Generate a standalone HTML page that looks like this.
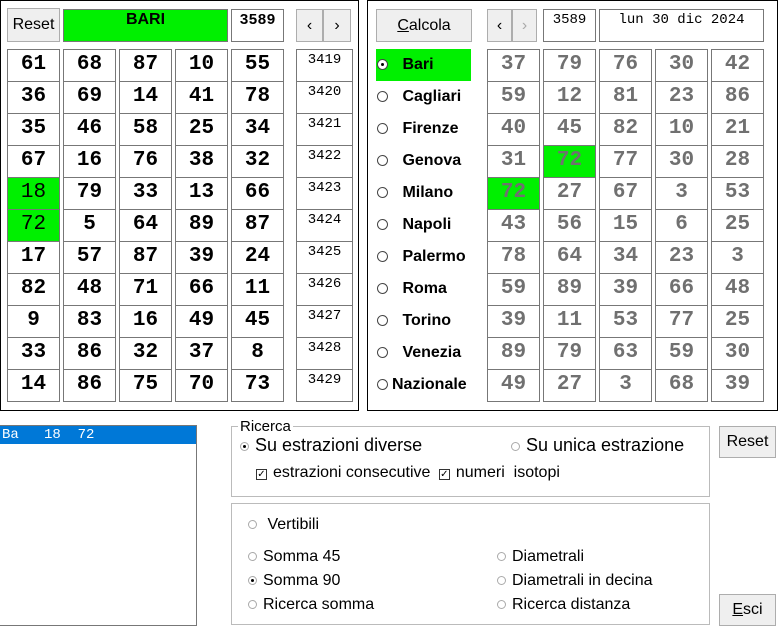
<!DOCTYPE html>
<html><head><meta charset="utf-8"><style>
*{box-sizing:border-box;margin:0;padding:0}
body{width:780px;height:627px;background:#fff;position:relative;overflow:hidden;font-family:"Liberation Sans",Arial,sans-serif}
.a{position:absolute}
.panel{position:absolute;border:1px solid #000}
.col{position:absolute;border-bottom:1px solid #777}
.col div{height:32px;border:1px solid #777;border-bottom:none;text-align:center;font:bold 21px/30px "Liberation Mono",monospace;color:#000}
.col.g div{color:#707070}
.col.s div{font:normal 14px/20px "Liberation Mono",monospace}
.col div.gr{background:#00f000}
.btn{position:absolute;background:#efefef;border:1px solid #adadad;text-align:center;font-size:16px;color:#000}
.box{position:absolute;border:1px solid #777;background:#fff;text-align:center;font:bold 15px/22px "Liberation Mono",monospace}
.nm{position:absolute;left:376px;width:95px;height:32px;font:bold 16px/32px "Liberation Sans",sans-serif}
.nm i{display:inline-block;width:11px;height:11px;border:1px solid #444;border-radius:50%;margin:0 10px 0 1px;vertical-align:-1px;position:relative;background:#fff}
.nm i.on:after{content:"";position:absolute;left:3px;top:3px;width:3px;height:3px;border-radius:50%;background:#000}
.n{font-family:"Liberation Sans Narrow","Liberation Sans",sans-serif;font-size:16px;position:absolute;color:#000;white-space:nowrap}
.r{display:inline-block;width:9px;height:9px;border:1px solid #aaa;border-radius:50%;position:relative;margin-right:6px;vertical-align:0}
.r.on:after{content:"";position:absolute;left:2px;top:2px;width:3px;height:3px;background:#000;border-radius:50%}
.cb{display:inline-block;width:11px;height:11px;border:1px solid #333;font-size:10px;line-height:9px;text-align:center;margin-right:6px;vertical-align:0}
.grp{position:absolute;border:1px solid #bbb}
</style></head><body>
<div class="panel" style="left:0;top:0;width:359px;height:411px"></div>
<div class="panel" style="left:367px;top:0;width:411px;height:411px"></div>

<div class="btn" style="left:7px;top:8px;width:53px;height:34px;line-height:32px">Reset</div>
<div class="a" style="left:63px;top:9px;width:165px;height:33px;background:#00f000;border:1px solid #777;text-align:center;font:bold 16px/20px 'Liberation Sans',sans-serif">BARI</div>
<div class="box" style="left:231px;top:9px;width:53px;height:33px">3589</div>
<div class="btn" style="left:296px;top:9px;width:27px;height:33px;line-height:31px">&lsaquo;</div>
<div class="btn" style="left:323px;top:9px;width:28px;height:33px;line-height:31px">&rsaquo;</div>

<div class="col" style="left:7px;top:49px;width:53px"><div>61</div><div>36</div><div>35</div><div>67</div><div class="gr" style="font-weight:normal">18</div><div class="gr" style="font-weight:normal">72</div><div>17</div><div>82</div><div>9</div><div>33</div><div>14</div></div>
<div class="col" style="left:63px;top:49px;width:53px"><div>68</div><div>69</div><div>46</div><div>16</div><div>79</div><div>5</div><div>57</div><div>48</div><div>83</div><div>86</div><div>86</div></div>
<div class="col" style="left:119px;top:49px;width:53px"><div>87</div><div>14</div><div>58</div><div>76</div><div>33</div><div>64</div><div>87</div><div>71</div><div>16</div><div>32</div><div>75</div></div>
<div class="col" style="left:175px;top:49px;width:53px"><div>10</div><div>41</div><div>25</div><div>38</div><div>13</div><div>89</div><div>39</div><div>66</div><div>49</div><div>37</div><div>70</div></div>
<div class="col" style="left:231px;top:49px;width:53px"><div>55</div><div>78</div><div>34</div><div>32</div><div>66</div><div>87</div><div>24</div><div>11</div><div>45</div><div>8</div><div>73</div></div>
<div class="col s" style="left:296px;top:49px;width:57px"><div>3419</div><div>3420</div><div>3421</div><div>3422</div><div>3423</div><div>3424</div><div>3425</div><div>3426</div><div>3427</div><div>3428</div><div>3429</div></div>

<div class="btn" style="left:376px;top:9px;width:96px;height:33px;line-height:31px"><u>C</u>alcola</div>
<div class="btn" style="left:487px;top:9px;width:25px;height:33px;line-height:31px">&lsaquo;</div>
<div class="btn" style="left:512px;top:9px;width:25px;height:33px;line-height:31px;color:#aaa">&rsaquo;</div>
<div class="box" style="left:543px;top:9px;width:53px;height:33px;font-weight:normal;font-size:14px;line-height:20px">3589</div>
<div class="box" style="left:599px;top:9px;width:165px;height:33px;font-weight:normal;font-size:14px;line-height:20px">lun 30 dic 2024</div>

<div class="nm" style="top:49px;background:#00f000"><i class="on"></i> Bari</div>
<div class="nm" style="top:81px"><i></i> Cagliari</div>
<div class="nm" style="top:113px"><i></i> Firenze</div>
<div class="nm" style="top:145px"><i></i> Genova</div>
<div class="nm" style="top:177px"><i></i> Milano</div>
<div class="nm" style="top:209px"><i></i> Napoli</div>
<div class="nm" style="top:241px"><i></i> Palermo</div>
<div class="nm" style="top:273px"><i></i> Roma</div>
<div class="nm" style="top:305px"><i></i> Torino</div>
<div class="nm" style="top:337px"><i></i> Venezia</div>
<div class="nm" style="top:369px"><i style="margin-right:4px"></i>Nazionale</div>

<div class="col g" style="left:487px;top:49px;width:53px"><div>37</div><div>59</div><div>40</div><div>31</div><div class="gr">72</div><div>43</div><div>78</div><div>59</div><div>39</div><div>89</div><div>49</div></div>
<div class="col g" style="left:543px;top:49px;width:53px"><div>79</div><div>12</div><div>45</div><div class="gr">72</div><div>27</div><div>56</div><div>64</div><div>89</div><div>11</div><div>79</div><div>27</div></div>
<div class="col g" style="left:599px;top:49px;width:53px"><div>76</div><div>81</div><div>82</div><div>77</div><div>67</div><div>15</div><div>34</div><div>39</div><div>53</div><div>63</div><div>3</div></div>
<div class="col g" style="left:655px;top:49px;width:53px"><div>30</div><div>23</div><div>10</div><div>30</div><div>3</div><div>6</div><div>23</div><div>66</div><div>77</div><div>59</div><div>68</div></div>
<div class="col g" style="left:711px;top:49px;width:53px"><div>42</div><div>86</div><div>21</div><div>28</div><div>53</div><div>25</div><div>3</div><div>48</div><div>25</div><div>30</div><div>39</div></div>

<div class="a" style="left:0;top:425px;width:197px;height:201px;border:1px solid #777;border-left:none"></div>
<div class="a" style="left:0;top:426px;width:196px;height:18px;background:#0078d7;color:#fff;font:14px/18px 'Liberation Mono',monospace;white-space:pre;padding-left:2px">Ba   18  72</div>

<div class="grp" style="left:231px;top:426px;width:479px;height:71px"></div>
<div class="n" style="left:238px;top:418px;background:#fff;padding:0 2px;font-size:15px">Ricerca</div>
<div class="n" style="left:240px;top:435px;font-size:18px"><span class="r on"></span>Su estrazioni diverse</div>
<div class="n" style="left:511px;top:435px;font-size:18px"><span class="r"></span>Su unica estrazione</div>
<div class="n" style="left:256px;top:464px"><span class="cb">✓</span>estrazioni consecutive <span class="cb" style="margin-left:4px">✓</span>numeri&nbsp; isotopi</div>
<div class="btn" style="left:719px;top:426px;width:57px;height:32px;line-height:30px;font-family:'Liberation Sans Narrow','Liberation Sans',sans-serif">Reset</div>

<div class="grp" style="left:231px;top:503px;width:479px;height:122px"></div>
<div class="n" style="left:248px;top:516px"><span class="r"></span> Vertibili</div>
<div class="n" style="left:248px;top:548px"><span class="r"></span>Somma 45</div>
<div class="n" style="left:248px;top:572px"><span class="r on"></span>Somma 90</div>
<div class="n" style="left:248px;top:596px"><span class="r"></span>Ricerca somma</div>
<div class="n" style="left:497px;top:548px"><span class="r"></span>Diametrali</div>
<div class="n" style="left:497px;top:572px"><span class="r"></span>Diametrali in decina</div>
<div class="n" style="left:497px;top:596px"><span class="r"></span>Ricerca distanza</div>
<div class="btn" style="left:719px;top:594px;width:57px;height:32px;line-height:30px;font-family:'Liberation Sans Narrow','Liberation Sans',sans-serif"><u>E</u>sci</div>
</body></html>
